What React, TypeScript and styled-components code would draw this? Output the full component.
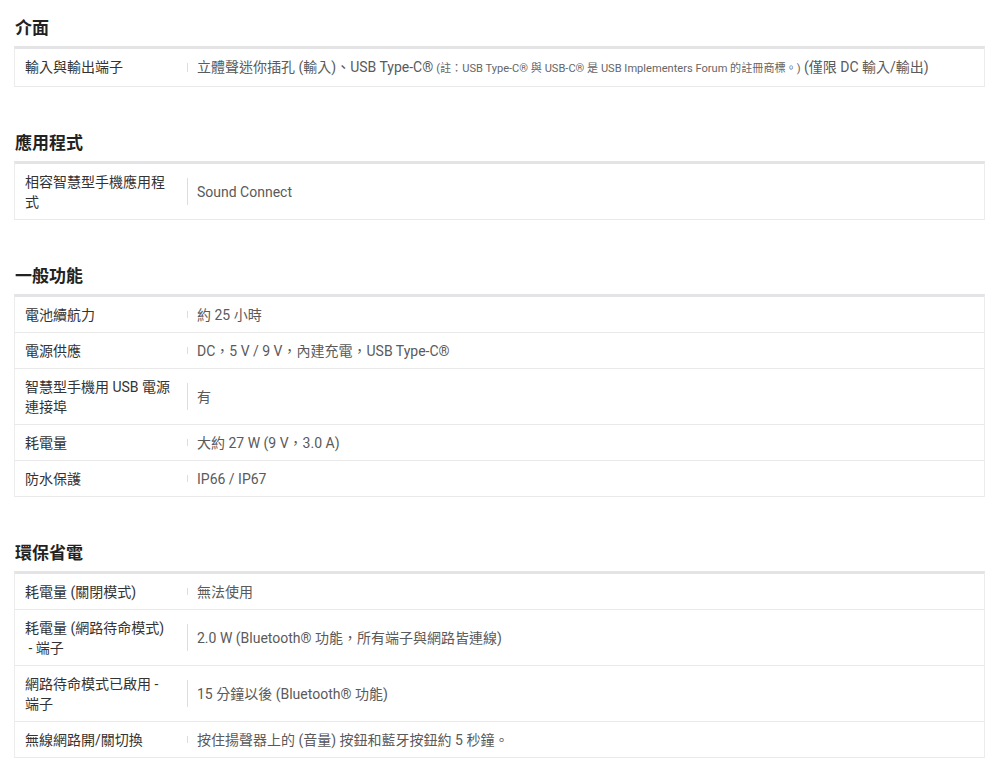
import React, { FC } from 'react';
import styled, { createGlobalStyle } from 'styled-components';

type SpecRow = {
  label: React.ReactNode;
  value: React.ReactNode;
};

type SpecSection = {
  title: string;
  rows: SpecRow[];
};

const GlobalStyle = createGlobalStyle`
  html, body {
    margin: 0;
    padding: 0;
    background: #ffffff;
  }
  body {
    font-family: Roboto, "Noto Sans CJK TC", "Noto Sans", sans-serif;
    -webkit-font-smoothing: antialiased;
  }
`;

const Page = styled.div`
  width: 1000px;
  box-sizing: border-box;
  padding: 16px 15px 0 14px;
`;

const Section = styled.section`
  margin-bottom: 44px;
`;

const Heading = styled.h2`
  margin: 0 0 6px 1px;
  font-size: 17px;
  line-height: 24px;
  font-weight: 700;
  color: #222222;
`;

const Table = styled.div`
  border-top: 3px solid #e4e4e6;
  border-left: 1px solid #ececec;
  border-right: 1px solid #ececec;
`;

const Row = styled.div`
  display: flex;
  align-items: stretch;
  border-bottom: 1px solid #e9e9e9;
  font-size: 14px;
  line-height: 20px;
`;

const Label = styled.div`
  flex: 0 0 172px;
  box-sizing: border-box;
  padding: 8px 12px 7px 10px;
  color: #333333;
`;

const Value = styled.div`
  position: relative;
  flex: 1;
  display: flex;
  align-items: center;
  padding: 8px 12px 7px 10px;
  color: #5a5a5a;

  &::before {
    content: '';
    position: absolute;
    left: 0;
    top: 14px;
    bottom: 14px;
    width: 1px;
    background: #dddddd;
  }
`;

const Note = styled.span`
  font-size: 11.1px;
  color: #666666;
  margin-left: 3px;
`;

const sections: SpecSection[] = [
  {
    title: '介面',
    rows: [
      {
        label: '輸入與輸出端子',
        value: (
          <span>
            立體聲迷你插孔 (輸入)、USB Type-C®
            <Note>(註：USB Type-C® 與 USB-C® 是 USB Implementers Forum 的註冊商標。)</Note> (僅限 DC 輸入/輸出)
          </span>
        ),
      },
    ],
  },
  {
    title: '應用程式',
    rows: [
      {
        label: (
          <>
            相容智慧型手機應用程
            <br />式
          </>
        ),
        value: 'Sound Connect',
      },
    ],
  },
  {
    title: '一般功能',
    rows: [
      { label: '電池續航力', value: '約 25 小時' },
      { label: '電源供應', value: 'DC，5 V / 9 V，內建充電，USB Type-C®' },
      {
        label: (
          <>
            智慧型手機用 USB 電源
            <br />
            連接埠
          </>
        ),
        value: '有',
      },
      { label: '耗電量', value: '大約 27 W (9 V，3.0 A)' },
      { label: '防水保護', value: 'IP66 / IP67' },
    ],
  },
  {
    title: '環保省電',
    rows: [
      { label: '耗電量 (關閉模式)', value: '無法使用' },
      {
        label: (
          <>
            耗電量 (網路待命模式)
            <br />
            &nbsp;- 端子
          </>
        ),
        value: '2.0 W (Bluetooth® 功能，所有端子與網路皆連線)',
      },
      {
        label: (
          <>
            網路待命模式已啟用 -
            <br />
            端子
          </>
        ),
        value: '15 分鐘以後 (Bluetooth® 功能)',
      },
      { label: '無線網路開/關切換', value: '按住揚聲器上的 (音量) 按鈕和藍牙按鈕約 5 秒鐘。' },
    ],
  },
];

const App: FC = () => {
  return (
    <>
      <GlobalStyle />
      <Page>
        {sections.map((section) => (
          <Section key={section.title}>
            <Heading>{section.title}</Heading>
            <Table>
              {section.rows.map((row, i) => (
                <Row key={i}>
                  <Label>{row.label}</Label>
                  <Value>{row.value}</Value>
                </Row>
              ))}
            </Table>
          </Section>
        ))}
      </Page>
    </>
  );
};

export default App;

App.displayName = 'App';
